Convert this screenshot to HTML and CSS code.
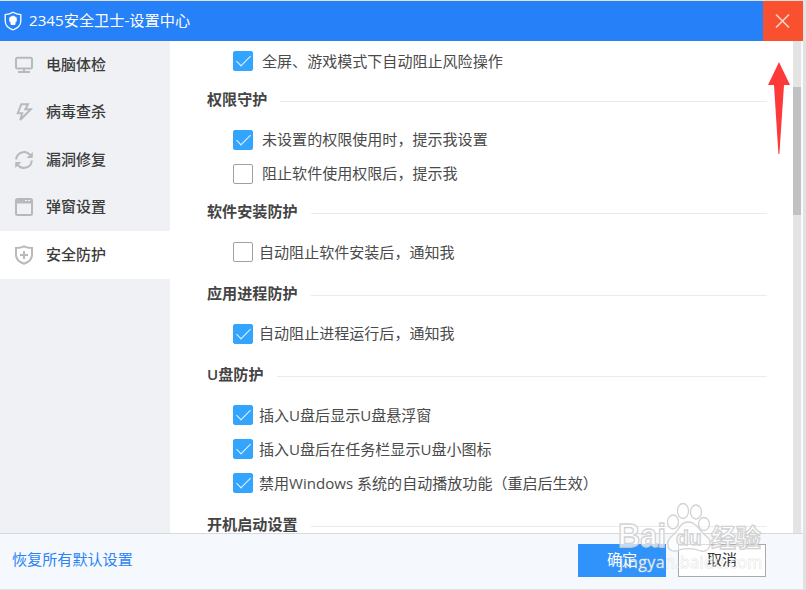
FILE: index.html
```html
<!DOCTYPE html>
<html lang="zh-CN">
<head>
    <meta charset="UTF-8">
    <meta name="viewport" content="width=device-width, initial-scale=1.0">
    <title>2345安全卫士-设置中心</title>
    <link rel="stylesheet" href="styles.css">
</head>
<body>
    <div class="window">
        <header class="titlebar">
            <svg class="logo" width="18" height="20" viewBox="0 0 18 20">
                <path d="M9 1.2 C11.5 2.8 14 3.4 16.8 3.6 V10 C16.8 14.5 13.5 17.2 9 18.8 C4.5 17.2 1.2 14.5 1.2 10 V3.6 C4 3.4 6.5 2.8 9 1.2Z" fill="none" stroke="#fff" stroke-width="1.3"/>
                <path d="M9 5 L12.2 6.6 V10.5 L11 10.8 V13.5 H7 V10.8 L5.8 10.5 V6.6Z" fill="#fff" stroke="#fff" stroke-linejoin="round"/>
            </svg>
            <h1>2345安全卫士-设置中心</h1>
            <button class="close">
                <svg width="16" height="16" viewBox="0 0 16 16"><path d="M1 1.5 L14 14.5 M14 1.5 L1 14.5" stroke="#ffd0c6" stroke-width="1.7"/></svg>
            </button>
        </header>
        <div class="main">
            <nav class="sidebar">
                <a class="nav-item">
                    <svg width="18" height="18" viewBox="0 0 18 18"><rect x="1" y="1.7" width="16" height="10.8" rx="1.5"/><path d="M9 12.5 V16 M3 16 H15"/></svg>
                    <span>电脑体检</span>
                </a>
                <a class="nav-item">
                    <svg width="18" height="18" viewBox="0 0 18 18"><path d="M6.3 1.2 H13 L10.3 6.3 H15.8 L5.2 17 L7.2 10.2 H2.8Z"/></svg>
                    <span>病毒查杀</span>
                </a>
                <a class="nav-item">
                    <svg width="18" height="18" viewBox="0 0 18 18"><path d="M1.2 8.5 A7.8 7.8 0 0 1 15.2 4.2 M16.8 9.5 A7.8 7.8 0 0 1 2.8 13.8"/><path class="solid" d="M17.8 1 V7 H11.6Z M0.2 17 V11 H6.4Z"/></svg>
                    <span>漏洞修复</span>
                </a>
                <a class="nav-item">
                    <svg width="18" height="18" viewBox="0 0 18 18"><rect x="1" y="1" width="16" height="16" rx="1.5"/><path class="solid" d="M1 1 H10 V3 H12 V1 H13 V3 H15 V1 H17 V5.5 H1Z"/></svg>
                    <span>弹窗设置</span>
                </a>
                <a class="nav-item active">
                    <svg width="18" height="20" viewBox="0 0 18 20"><path d="M9 1.3 C11.5 2.6 14 3 17 3 V10 C17 14.5 14 17 9 18.8 C4 17 1 14.5 1 10 V3 C4 3 6.5 2.6 9 1.3Z M9 6 V14 M5 10 H13"/></svg>
                    <span>安全防护</span>
                </a>
            </nav>
            <div class="content">
                <label class="option wide"><span class="check on"></span><span>全屏、游戏模式下自动阻止风险操作</span></label>
                <h2 class="tight"><span>权限守护</span></h2>
                <label class="option wide"><span class="check on"></span><span>未设置的权限使用时，提示我设置</span></label>
                <label class="option wide"><span class="check"></span><span>阻止软件使用权限后，提示我</span></label>
                <h2 class="tight"><span>软件安装防护</span></h2>
                <label class="option"><span class="check"></span><span>自动阻止软件安装后，通知我</span></label>
                <h2><span>应用进程防护</span></h2>
                <label class="option"><span class="check on"></span><span>自动阻止进程运行后，通知我</span></label>
                <h2><span>U盘防护</span></h2>
                <label class="option"><span class="check on"></span><span>插入U盘后显示U盘悬浮窗</span></label>
                <label class="option"><span class="check on"></span><span>插入U盘后在任务栏显示U盘小图标</span></label>
                <label class="option"><span class="check on"></span><span>禁用Windows 系统的自动播放功能（重启后生效）</span></label>
                <h2><span>开机启动设置</span></h2>
            </div>
            <div class="scrollbar"><div class="thumb"></div></div>
        </div>
        <footer class="footer">
            <a class="reset">恢复所有默认设置</a>
            <button class="btn primary">确定</button>
            <button class="btn">取消</button>
        </footer>
    </div>

    <svg class="arrow" width="22" height="92" viewBox="0 0 22 92"><path d="M11 0 L22 23 H16 L11.4 92 H10.4 L6 23 H0Z" fill="#fc3a3a"/></svg>

    <svg class="watermark" width="156" height="80" viewBox="0 0 156 80">
        <g class="paw">
            <ellipse cx="59" cy="25" rx="5.5" ry="7"/>
            <ellipse cx="69" cy="14" rx="5.5" ry="7.5"/>
            <ellipse cx="82" cy="15" rx="5.5" ry="7"/>
            <ellipse cx="90" cy="27" rx="5.5" ry="6.5"/>
            <path d="M74 25 C82 25 85 33 92 39 C100 45 95 56 87 54 C79 51 70 51 62 54 C53 55 51 45 58 39 C65 34 66 25 74 25Z"/>
        </g>
        <text class="mark" x="4" y="50" textLength="48" lengthAdjust="spacingAndGlyphs">Bai</text>
        <text class="mark du" x="62" y="48">du</text>
        <text class="mark cn" x="97" y="50" textLength="50">经验</text>
        <text class="site" x="5" y="71" textLength="143">jingyan.baidu.com</text>
    </svg>
</body>
</html>
```
FILE: styles.css
```css
* {
    margin: 0;
    padding: 0;
    box-sizing: border-box;
}
body {
    background: #e2e2e3;
    height: 590px;
    padding-top: 1px;
    overflow: hidden;
    font-family: "Open Sans", "Noto Sans CJK SC", sans-serif;
    font-size: 15px;
    color: #4a4a4a;
}
.window {
    width: 803px;
    height: 588px;
    display: flex;
    flex-direction: column;
    background: #fff;
}
.titlebar {
    height: 40px;
    flex: none;
    display: flex;
    align-items: center;
    background: #2680f8;
    color: #fff;
    padding-left: 4px;
}
.titlebar h1 {
    flex: 1;
    margin-left: 7px;
    padding-bottom: 4px;
    font-size: 15.2px;
    font-weight: 400;
}
.close {
    width: 40px;
    height: 40px;
    border: none;
    background: #f9512f;
    display: flex;
    align-items: center;
    justify-content: center;
}
.main {
    height: 492px;
    flex: none;
    display: flex;
    overflow: hidden;
}
.sidebar {
    width: 170px;
    background: #f0f1f5;
}
.nav-item {
    height: 47.5px;
    display: flex;
    align-items: center;
    gap: 13px;
    padding-left: 15px;
    font-weight: 500;
    color: #3c3c3c;
}
.nav-item span {
    padding-bottom: 3px;
}
.nav-item svg {
    fill: none;
    stroke: #b9b9bb;
    stroke-width: 2;
}
.nav-item .solid {
    fill: #b9b9bb;
    stroke: none;
}
.nav-item.active {
    background: #fff;
}
.content {
    flex: 1;
    padding: 3px 26px 0 37px;
}
.content h2 {
    height: 20px;
    margin: 14.5px 0 13px;
    display: flex;
    align-items: center;
    gap: 13px;
    font-size: 15.1px;
    font-weight: 600;
    color: #444;
}
.content h2 span {
    padding-bottom: 4px;
}
.content h2.tight {
    margin-top: 11.5px;
}
.content h2::after {
    content: "";
    flex: 1;
    height: 1px;
    margin-top: 3px;
    background: #ebebeb;
}
.option {
    height: 34px;
    display: flex;
    align-items: center;
    gap: 6px;
    padding-left: 26px;
    font-size: 15.05px;
    white-space: pre;
}
.option span:last-child {
    padding-bottom: 2px;
}
.option.wide {
    gap: 9px;
}
.check {
    width: 20px;
    height: 20px;
    border: 1px solid #a0a0a0;
    border-radius: 2px;
    display: flex;
    justify-content: center;
}
.check.on {
    background: #33a5ff;
    border-color: #33a5ff;
}
.check.on::after {
    content: "";
    width: 6px;
    height: 13px;
    border: solid #e6f4ff;
    border-width: 0 1.4px 1.4px 0;
    transform: rotate(45deg);
}
.scrollbar {
    width: 10px;
    padding-top: 46px;
    border-left: 1px solid #e4e4e4;
    border-right: 2px solid #fafafa;
    background: #e4e4e4;
}
.thumb {
    height: 128px;
    margin-left: -1px;
    background: #c1c1c1;
}
.footer {
    flex: 1;
    display: flex;
    align-items: center;
    gap: 12px;
    padding: 0 37px 2px 12px;
    border-top: 1px solid #d5dade;
    background: #f5f9fd;
}
.reset {
    flex: 1;
    padding-bottom: 5px;
    font-size: 15.1px;
    color: #2c83f6;
}
.btn {
    width: 88px;
    height: 33px;
    padding-bottom: 4px;
    border: 1px solid #aaa;
    background: #fff;
    font: inherit;
    color: #333;
}
.btn.primary {
    background: #3093fb;
    border-color: #3093fb;
    color: #fff;
}
/* overlays */
.arrow {
    position: absolute;
    left: 768px;
    top: 62px;
}
.watermark {
    position: absolute;
    left: 614px;
    top: 497px;
}
.paw {
    fill: rgba(255, 255, 255, 0.6);
    stroke: #d2d2d2;
    stroke-width: 1.3;
}
.mark {
    font: bold 33px "Liberation Sans", sans-serif;
    fill: rgba(255, 255, 255, 0.7);
    stroke: #d2d2d2;
    stroke-width: 1.3;
}
.mark.du {
    font-size: 21px;
}
.mark.cn {
    font: bold 25px "Noto Sans CJK SC", sans-serif;
}
.site {
    font: 16px "Open Sans", sans-serif;
    fill: rgba(255, 255, 255, 0.8);
    stroke: rgba(190, 190, 190, 0.5);
    stroke-width: 0.8;
    paint-order: stroke;
}
```
